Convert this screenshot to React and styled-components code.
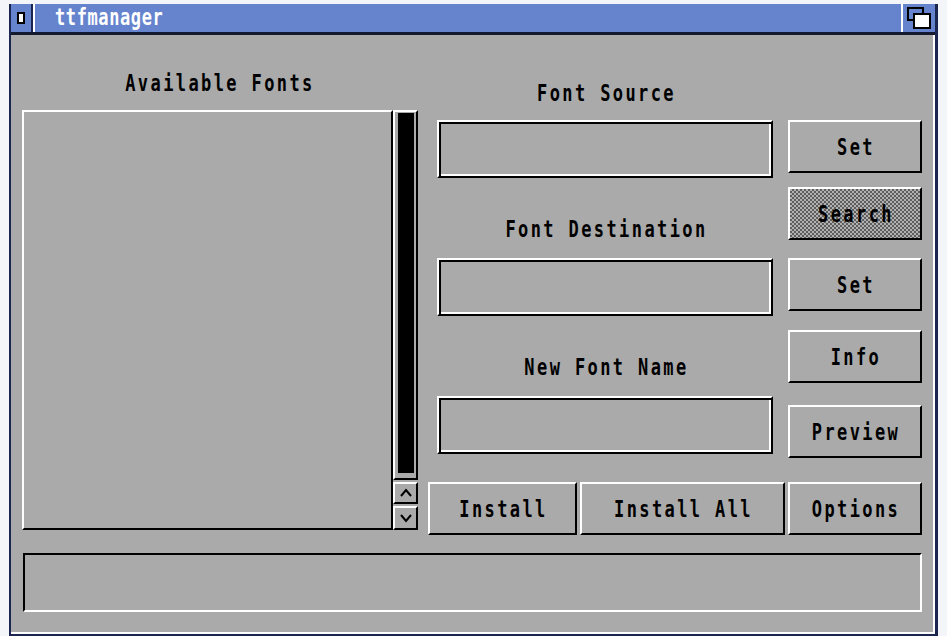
import styled, { createGlobalStyle, css } from "styled-components";

const GlobalStyle = createGlobalStyle`
  html, body {
    margin: 0;
    padding: 0;
    background: #f3f5f9;
  }
  body {
    font-family: "DejaVu Sans Mono", "Liberation Mono", monospace;
  }
`;

const raised = css`
  border-style: solid;
  border-width: 2px;
  border-color: #ffffff #000000 #000000 #ffffff;
`;

const recessed = css`
  border-style: solid;
  border-width: 2px;
  border-color: #000000 #ffffff #ffffff #000000;
`;

const Chevron = ({ up }) => (
  <svg width="14" height="10" viewBox="0 0 14 10">
    <polyline
      points={up ? "2,8 7,2 12,8" : "2,2 7,8 12,2"}
      fill="none"
      stroke="#000"
      strokeWidth="2"
    />
  </svg>
);

const App = () => {
  return (
    <>
      <GlobalStyle />
      <Page>
        <Window>
          <TitleBar>
            <CloseCell>
              <CloseBox />
            </CloseCell>
            <TitleText>
              <Tall>ttfmanager</Tall>
            </TitleText>
            <DepthCell>
              <svg width="24" height="22" viewBox="0 0 24 22">
                <rect x="1" y="1" width="15" height="12" fill="#6584cd" stroke="#000" strokeWidth="2" />
                <rect x="7" y="7" width="16" height="14" fill="#fff" stroke="#000" strokeWidth="2" />
              </svg>
            </DepthCell>
          </TitleBar>

          <Content>
            <Top>
              <LeftCol>
                <PanelLabel>
                  <Tall>Available Fonts</Tall>
                </PanelLabel>
                <ListRow>
                  <ListBox />
                  <Scroller>
                    <Track>
                      <Knob />
                    </Track>
                    <Arrow $h={22}>
                      <Chevron up />
                    </Arrow>
                    <Arrow $h={24}>
                      <Chevron />
                    </Arrow>
                  </Scroller>
                </ListRow>
              </LeftCol>

              <RightSection>
                <Upper>
                  <MiddleCol>
                    <FieldLabel>
                      <Tall>Font Source</Tall>
                    </FieldLabel>
                    <StringField $mt={6} />
                    <FieldLabel $mt={30}>
                      <Tall>Font Destination</Tall>
                    </FieldLabel>
                    <StringField $mt={8} />
                    <FieldLabel $mt={30}>
                      <Tall>New Font Name</Tall>
                    </FieldLabel>
                    <StringField $mt={8} />
                  </MiddleCol>

                  <ButtonCol>
                    <Button $mt={48}>
                      <Tall>Set</Tall>
                    </Button>
                    <Button $mt={14} $ghost>
                      <Tall>Search</Tall>
                    </Button>
                    <Button $mt={18}>
                      <Tall>Set</Tall>
                    </Button>
                    <Button $mt={19}>
                      <Tall>Info</Tall>
                    </Button>
                    <Button $mt={22}>
                      <Tall>Preview</Tall>
                    </Button>
                  </ButtonCol>
                </Upper>

                <BottomRow>
                  <Button $w={149}>
                    <Tall>Install</Tall>
                  </Button>
                  <Button $w={205}>
                    <Tall>Install All</Tall>
                  </Button>
                  <Button $w={134}>
                    <Tall>Options</Tall>
                  </Button>
                </BottomRow>
              </RightSection>
            </Top>

            <StatusBar />
          </Content>
        </Window>
      </Page>
    </>
  );
};

// Window frame

const Page = styled.div`
  padding: 4px 0 0 9px;
`;

const Window = styled.div`
  width: 929px;
  height: 632px;
  box-sizing: border-box;
  border-left: 2px solid #1a2550;
  border-right: 3px solid #1a2550;
  border-bottom: 2px solid #1a2550;
  background: #aaaaaa;
  display: flex;
  flex-direction: column;
`;

const TitleBar = styled.div`
  height: 28px;
  flex: none;
  background: #6584cd;
  border-bottom: 3px solid #141a30;
  display: flex;
  align-items: stretch;
`;

const CloseCell = styled.div`
  width: 20px;
  border-right: 2px solid #1a2550;
  box-shadow: 2px 0 0 #ffffff;
  display: flex;
  align-items: center;
  justify-content: center;
`;

const CloseBox = styled.div`
  width: 4px;
  height: 8px;
  background: #ffffff;
  border: 2px solid #000000;
`;

const TitleText = styled.div`
  flex: 1;
  padding-left: 22px;
  color: #ffffff;
  font-size: 17px;
  font-weight: bold;
  letter-spacing: 0.6px;
  line-height: 26px;
`;

const DepthCell = styled.div`
  width: 32px;
  border-left: 2px solid #ffffff;
  display: flex;
  align-items: center;
  justify-content: center;
`;

const Tall = styled.span`
  display: inline-block;
  transform: scaleY(1.4);
  white-space: pre;
`;

const Content = styled.div`
  flex: 1;
  border-right: 2px solid #ffffff;
  border-bottom: 2px solid #ffffff;
  padding: 37px 0 0 11px;
  display: flex;
  flex-direction: column;
  font-size: 17px;
  font-weight: bold;
  letter-spacing: 2.4px;
  color: #000000;
`;

const Top = styled.div`
  display: flex;
  align-items: flex-start;
`;

// Font list with scroller

const LeftCol = styled.div`
  width: 396px;
  display: flex;
  flex-direction: column;
`;

const PanelLabel = styled.div`
  height: 38px;
  line-height: 22px;
  text-align: center;
`;

const ListRow = styled.div`
  display: flex;
  height: 420px;
`;

const ListBox = styled.div`
  ${raised};
  width: 371px;
  box-sizing: border-box;
  background: #aaaaaa;
`;

const Scroller = styled.div`
  width: 25px;
  display: flex;
  flex-direction: column;
  gap: 2px;
`;

const Track = styled.div`
  ${raised};
  height: 370px;
  box-sizing: border-box;
  padding: 1px 2px 5px 3px;
  display: flex;
`;

const Knob = styled.div`
  flex: 1;
  background: #000000;
`;

const Arrow = styled.div`
  ${raised};
  height: ${(p) => p.$h}px;
  box-sizing: border-box;
  display: flex;
  align-items: center;
  justify-content: center;
`;

// Paths and buttons

const RightSection = styled.div`
  margin-left: 10px;
  width: 494px;
  display: flex;
  flex-direction: column;
`;

const Upper = styled.div`
  display: flex;
  align-items: flex-start;
`;

const MiddleCol = styled.div`
  width: 357px;
  display: flex;
  flex-direction: column;
`;

const FieldLabel = styled.div`
  height: 42px;
  line-height: 42px;
  margin-top: ${(p) => p.$mt || 0}px;
  text-align: center;
`;

const StringField = styled.div`
  ${raised};
  margin: ${(p) => p.$mt}px 0 0 9px;
  width: 336px;
  height: 58px;
  box-sizing: border-box;
  box-shadow: inset 2px 2px 0 #000000, inset -2px -2px 0 #ffffff;
`;

const ButtonCol = styled.div`
  margin-left: 3px;
  width: 134px;
  display: flex;
  flex-direction: column;
`;

const Button = styled.div`
  ${raised};
  width: ${(p) => p.$w || 134}px;
  height: 53px;
  margin-top: ${(p) => p.$mt || 0}px;
  box-sizing: border-box;
  display: flex;
  align-items: center;
  justify-content: center;
  padding-left: 2px;
  background: ${(p) =>
    p.$ghost
      ? "repeating-conic-gradient(#5e5e5e 0 25%, #b0b0b0 0 50%) 0 0 / 4px 4px"
      : "#aaaaaa"};
`;

const BottomRow = styled.div`
  margin-top: 24px;
  display: flex;
  gap: 3px;
`;

const StatusBar = styled.div`
  ${recessed};
  margin: 18px 0 0 1px;
  width: 899px;
  height: 59px;
  box-sizing: border-box;
`;

export default App;
